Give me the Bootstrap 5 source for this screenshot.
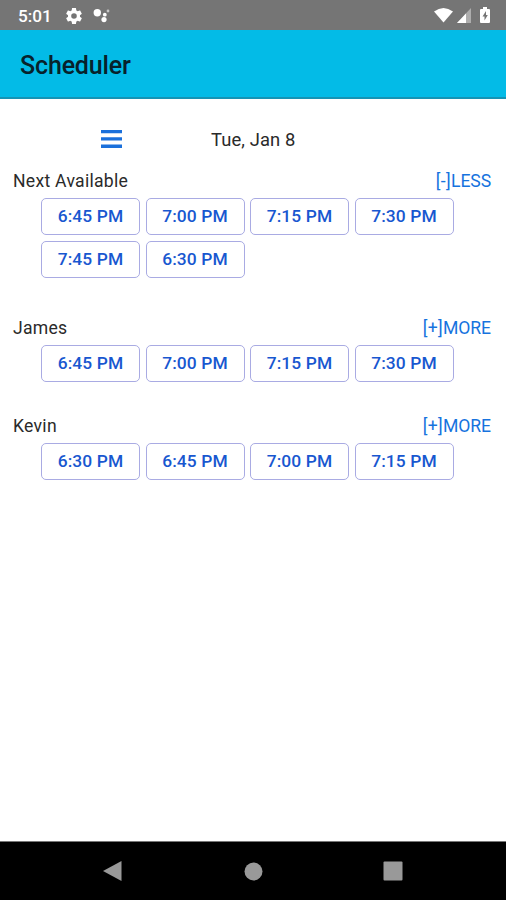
<!DOCTYPE html>
<html lang="en">
<head>
<meta charset="utf-8">
<meta name="viewport" content="width=device-width, initial-scale=1">
<title>Scheduler</title>
<link href="https://cdn.jsdelivr.net/npm/bootstrap@5.3.0/dist/css/bootstrap.min.css" rel="stylesheet">
<style>
body{font-family:Roboto,"Liberation Sans",sans-serif;color:#2a2a2a;height:900px;overflow:hidden;background:#fff}
svg{display:block;flex:none}
.status-bar{height:30px;background:#757575;color:#fff;padding:1px 15px 0 18px}
.clock{font-size:17.2px;font-weight:500;line-height:28px;width:48px;white-space:nowrap}
.app-bar{height:69px;background:#03bbe7;border-bottom:2px solid #1594b5;padding:4px 20px 0}
.app-title{font-size:25px;font-weight:500;letter-spacing:-.15px;color:#07222b;line-height:1}
.date-row{height:40px;margin-top:20px;padding-left:101px}
.date-text{font-size:18.4px;letter-spacing:.1px;margin-left:89px;padding-top:2px}
.group-head{height:26px;padding:0 15px 0 13px;font-size:17.6px;line-height:26px;letter-spacing:.27px}
.toggle-link{color:#1673de;text-decoration:none;letter-spacing:-.1px}
.bracket{letter-spacing:.35px}
.slots{padding-left:41px;margin-top:4px;gap:6px 5.5px;width:460px}
.slots .btn{width:99px;height:37px;padding:0;border:1.3px solid #a9abe3;border-radius:5px;color:#1857d0;font-size:17.4px;font-weight:500;letter-spacing:.1px;line-height:35px}
.group-next{margin-top:8.6px}
.group-james{margin-top:37px}
.group-kevin{margin-top:31.4px}
.nav-keys{height:59px;background:#000;border-top:1px solid #777;padding-left:102px}
.key-home{margin-left:122px}
.key-recent{margin-left:120px}
</style>
</head>
<body class="d-flex flex-column">
<header>
  <div class="status-bar d-flex align-items-center">
    <span class="clock">5:01</span>
    <svg width="16" height="16" viewBox="2 2 20 20"><path fill="#fff" fill-rule="evenodd" d="M19.43 12.98c.04-.32.07-.64.07-.98s-.03-.66-.07-.98l2.11-1.65c.19-.15.24-.42.12-.64l-2-3.46c-.12-.22-.39-.3-.61-.22l-2.49 1c-.52-.4-1.08-.73-1.69-.98l-.38-2.65C14.46 2.18 14.25 2 14 2h-4c-.25 0-.46.18-.49.42l-.38 2.65c-.61.25-1.17.59-1.69.98l-2.49-1c-.23-.09-.49 0-.61.22l-2 3.46c-.13.22-.07.49.12.64l2.11 1.65c-.04.32-.07.65-.07.98s.03.66.07.98l-2.11 1.65c-.19.15-.24.42-.12.64l2 3.46c.12.22.39.3.61.22l2.49-1c.52.4 1.08.73 1.69.98l.38 2.65c.03.24.24.42.49.42h4c.25 0 .46-.18.49-.42l.38-2.65c.61-.25 1.17-.59 1.69-.98l2.49 1c.23.09.49 0 .61-.22l2-3.460c.12-.22.07-.49-.12-.64zM12 15.500A3.500 3.500 0 1 1 12 8.500a3.500 3.500 0 0 1 0 7z"/></svg>
    <svg class="ms-2" width="20" height="16" viewBox="0 0 20 16"><g fill="#fff"><circle cx="7.300" cy="4.800" r="3.700"/><circle cx="14.800" cy="6.700" r="1.900"/><circle cx="14" cy="11.600" r="2.600"/><circle cx="18" cy="3" r="1.400" opacity=".6"/></g></svg>
    <svg class="ms-auto" width="19" height="16" viewBox="0 0 19 16"><path fill="#fff" d="M0 3.500Q9.500-3.500 19 3.500L9.500 14.500z"/></svg>
    <svg class="ms-1" width="14" height="16" viewBox="0 0 14 16"><path fill="#adadad" d="M14 0v15H0z"/><path fill="#fff" d="M9 5.400V15H0z"/></svg>
    <svg class="ms-2" width="12" height="17" viewBox="0 0 12 17"><path fill="#fff" d="M4 0h4v2h2q1 0 1 1v12q0 1-1 1H2q-1 0-1-1V3q0-1 1-1h2z"/><path fill="#757575" d="M7 4 3.500 9.500H5.500v4L8.800 8H7z"/></svg>
  </div>
  <div class="app-bar d-flex align-items-center"><h1 class="app-title m-0">Scheduler</h1></div>
</header>
<main class="flex-grow-1">
  <div class="date-row d-flex align-items-center">
    <svg width="21" height="18" viewBox="0 0 21 18"><path fill="#1b70db" d="M0 0h21v3.300H0zM0 7.300h21v3.300H0zM0 14.600h21v3.300H0z"/></svg>
    <span class="date-text">Tue, Jan 8</span>
  </div>
  <section class="group-next">
    <div class="group-head d-flex justify-content-between"><span>Next Available</span><a class="toggle-link" href="#"><span class="bracket">[-]</span>LESS</a></div>
    <div class="slots d-flex flex-wrap">
      <button class="btn">6:45 PM</button><button class="btn">7:00 PM</button><button class="btn">7:15 PM</button><button class="btn">7:30 PM</button>
      <button class="btn">7:45 PM</button><button class="btn">6:30 PM</button>
    </div>
  </section>
  <section class="group-james">
    <div class="group-head d-flex justify-content-between"><span>James</span><a class="toggle-link" href="#"><span class="bracket">[+]</span>MORE</a></div>
    <div class="slots d-flex flex-wrap">
      <button class="btn">6:45 PM</button><button class="btn">7:00 PM</button><button class="btn">7:15 PM</button><button class="btn">7:30 PM</button>
    </div>
  </section>
  <section class="group-kevin">
    <div class="group-head d-flex justify-content-between"><span>Kevin</span><a class="toggle-link" href="#"><span class="bracket">[+]</span>MORE</a></div>
    <div class="slots d-flex flex-wrap">
      <button class="btn">6:30 PM</button><button class="btn">6:45 PM</button><button class="btn">7:00 PM</button><button class="btn">7:15 PM</button>
    </div>
  </section>
</main>
<footer class="nav-keys d-flex align-items-center">
  <svg width="20" height="22" viewBox="0 0 20 22"><path fill="#999" d="M19.500 1v20L1 11z"/></svg>
  <svg class="key-home" width="19" height="19" viewBox="0 0 19 19"><circle cx="9.500" cy="9.500" r="9" fill="#999"/></svg>
  <svg class="key-recent" width="20" height="20" viewBox="0 0 20 20"><rect x=".5" y=".5" width="19" height="19" rx="1" fill="#999"/></svg>
</footer>
<script src="https://cdn.jsdelivr.net/npm/bootstrap@5.3.0/dist/js/bootstrap.bundle.min.js"></script>
</body>
</html>
